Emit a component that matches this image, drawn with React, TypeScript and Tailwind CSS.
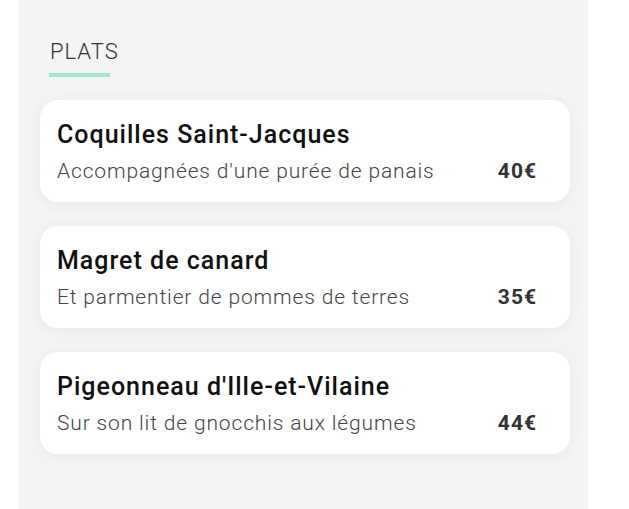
const dishes = [
  { name: "Coquilles Saint-Jacques", description: "Accompagnées d'une purée de panais", price: 40 },
  { name: "Magret de canard", description: "Et parmentier de pommes de terres", price: 35 },
  { name: "Pigeonneau d'Ille-et-Vilaine", description: "Sur son lit de gnocchis aux légumes", price: 44 },
];

export default function App() {
  return (
    <div className="min-h-[509px] bg-white pl-[19px] font-['Roboto',sans-serif]">
      <div className="min-h-[509px] w-[569px] bg-[#f4f4f4] pl-[21px] pt-[38px]">
        <h2 className="pl-[10px] text-[22px] font-light leading-[28px] tracking-[1px] text-[#333]">PLATS</h2>
        <div className="ml-[9px] mt-[7px] h-[4px] w-[61px] bg-[#9ee8d2]" />
        <div className="mt-[23px] flex w-[530px] flex-col gap-[24px]">
          {dishes.map((dish) => (
            <div
              key={dish.name}
              className="rounded-[18px] bg-white pb-[18px] pl-[17px] pr-[33px] pt-[20px] shadow-[0_2px_16px_rgba(0,0,0,0.06)]"
            >
              <h3 className="text-[25px] font-medium leading-[30px] tracking-[1px] text-[#111]">{dish.name}</h3>
              <div className="mt-[8px] flex items-baseline justify-between">
                <p className="text-[21px] font-light leading-[26px] tracking-[0.85px] text-[#444]">{dish.description}</p>
                <span className="text-[21px] font-bold leading-[26px] tracking-[1px] text-[#333]">{dish.price}€</span>
              </div>
            </div>
          ))}
        </div>
      </div>
    </div>
  );
}
